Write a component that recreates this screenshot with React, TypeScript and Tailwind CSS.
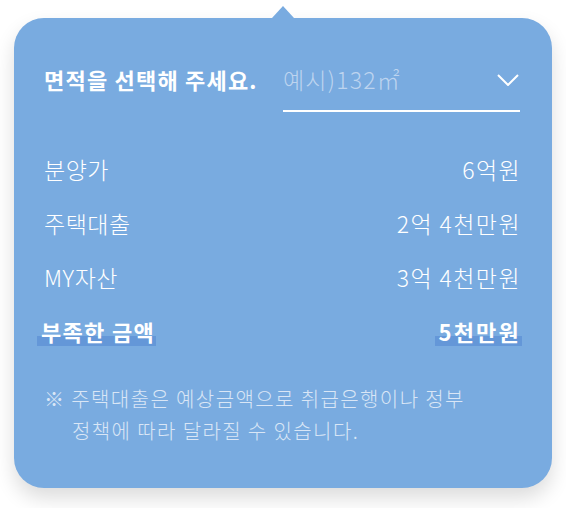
import React from 'react';

const rows = [
  { label: '분양가', value: '6억원' },
  { label: '주택대출', value: '2억 4천만원' },
  { label: 'MY자산', value: '3억 4천만원' },
];

export default function App() {
  return (
    <div
      className="w-[566px] h-[508px] bg-white pt-[18px] pl-[14px]"
      style={{ fontFamily: '"Noto Sans CJK KR", "Noto Sans", sans-serif' }}
    >
      <div className="relative w-[538px] h-[470px] rounded-[30px] bg-[#79abe0] shadow-[0_10px_20px_rgba(0,0,0,0.14)] pl-[30px] pr-[32px] pt-[46px]">
        {/* pointer */}
        <div className="absolute left-[258px] -top-[12px] w-0 h-0 border-l-[11px] border-r-[11px] border-b-[12px] border-l-transparent border-r-transparent border-b-[#79abe0]" />

        <div className="flex items-start justify-between">
          <div className="text-[22px] leading-[30px] font-bold tracking-[1.2px] text-white">면적을 선택해 주세요.</div>
          <div className="w-[237px] flex items-start justify-between pb-[16px] border-b-2 border-white">
            <span className="text-[23px] leading-[30px] font-light tracking-[1.2px] text-[#bdd4ef]">예시)132㎡</span>
            <svg width="22" height="12" viewBox="0 0 22 12" className="mt-[10px] mr-[1px]">
              <path d="M1 1 L11 11 L21 1" fill="none" stroke="white" strokeWidth="2" />
            </svg>
          </div>
        </div>

        <div className="mt-[30px]">
          {rows.map((r) => (
            <div key={r.label} className="h-[54px] flex items-center justify-between text-[23px] font-light text-white">
              <span className="tracking-[0.5px]">{r.label}</span>
              <span className="tracking-[1.4px] -mr-[1px]">{r.value}</span>
            </div>
          ))}
          <div className="h-[54px] flex items-center justify-between text-[22px] font-bold tracking-[1.3px] text-white">
            <span className="-ml-[7px] inline-block pl-[4px] pr-[1px] leading-[30px] bg-[linear-gradient(to_bottom,transparent_20px,#6497d8_20px,#6497d8_30px)]">
              부족한 금액
            </span>
            <span className="inline-block pl-[3px] pr-[1px] -mr-[2px] leading-[30px] tracking-[2.2px] bg-[linear-gradient(to_bottom,transparent_20px,#6497d8_20px,#6497d8_30px)]">
              5천만원
            </span>
          </div>
        </div>

        <p className="mt-[25px] pl-[28px] -indent-[28px] text-[20px] leading-[32px] font-light tracking-[1.4px] text-[#d9e6f6]">
          ※ 주택대출은 예상금액으로 취급은행이나 정부
          <br />
          정책에 따라 달라질 수 있습니다.
        </p>
      </div>
    </div>
  );
}
